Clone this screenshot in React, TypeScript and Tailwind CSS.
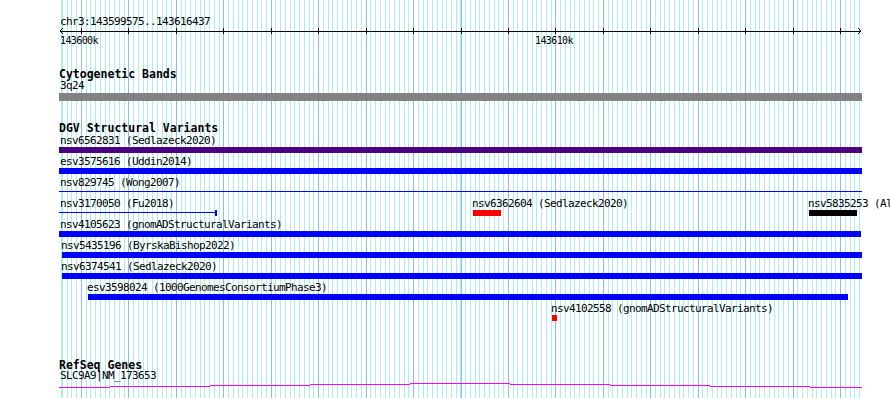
import React from 'react';

const TICKS = Array.from({ length: 17 }, (_, k) => Math.round(22 + 47.44 * k));

// stepped intron line of SLC9A9, [x0, x1, y] in track coords
const INTRON: [number, number, number][] = [
    [0, 51, 4],
    [51, 151, 3],
    [151, 251, 2],
    [251, 351, 1],
    [351, 451, 0],
    [451, 551, 1],
    [551, 651, 2],
    [651, 751, 3],
    [751, 803, 4],
];

function Label({ className = '', children }: { className?: string; children: React.ReactNode }) {
    return (
        <div className={`h-[10px] text-[11px] leading-[10px] tracking-[-0.62px] whitespace-nowrap ${className}`}>
            {children}
        </div>
    );
}

function Heading({ className = '', children }: { className?: string; children: React.ReactNode }) {
    return <div className={`h-[12px] text-[11.5px] leading-[12px] font-bold whitespace-nowrap ${className}`}>{children}</div>;
}

function Ruler() {
    return (
        <>
            <svg width="803" height="8" className="block" shapeRendering="crispEdges">
                <rect x="1" y="4" width="801" height="1" fill="#000" />
                {TICKS.map((t) => (
                    <rect key={t} x={t} y="1" width="1" height="6" fill="#000" />
                ))}
                <polyline points="4,1 1,4 4,7" fill="none" stroke="#000" strokeWidth="1" />
                <polyline points="799,1 802,4 799,7" fill="none" stroke="#000" strokeWidth="1" />
            </svg>
            <div className="flex h-[9px] mt-px text-[10px] leading-[9px] tracking-[-0.6px] whitespace-nowrap">
                <span className="-ml-[2px] w-[44px] shrink-0 text-center">143600k</span>
                <span className="ml-[431px] w-[44px] shrink-0 text-center">143610k</span>
            </div>
        </>
    );
}

export default function App() {
    return (
        <div className="w-full h-[398px] overflow-hidden bg-white text-black font-['DejaVu_Sans_Mono',monospace]">
            <div className="ml-[59px] w-[803px] h-full pt-[17px] bg-[repeating-linear-gradient(90deg,#88bbee_0px,#88bbee_1px,transparent_1px,transparent_47.44px),repeating-linear-gradient(90deg,#aaeeee_0px,#aaeeee_1px,transparent_1px,transparent_4.744px)] bg-[position:22px_0,3px_0]">
                {/* RULER */}
                <Label className="pl-px">chr3:143599575..143616437</Label>
                <Ruler />

                {/* CYTOBANDS */}
                <Heading className="mt-[23px]">Cytogenetic Bands</Heading>
                <Label className="mt-px pl-px">3q24</Label>
                <div className="mt-[2px] h-[8px] bg-[#828282]" />

                {/* DGV */}
                <Heading className="mt-[21px]">DGV Structural Variants</Heading>

                <Label className="mt-[2px] pl-px">nsv6562831 (Sedlazeck2020)</Label>
                <div className="mt-px h-[6px] bg-[#4b0082]" />

                <Label className="mt-[4px] pl-px">esv3575616 (Uddin2014)</Label>
                <div className="mt-px h-[6px] bg-[#0000ff]" />

                <Label className="mt-[4px] pl-px">nsv829745 (Wong2007)</Label>
                <div className="mt-[3px] h-px bg-[#0000ff]" />

                <Label className="mt-[7px] flex">
                    <span className="w-[413px] shrink-0 pl-px">nsv3170050 (Fu2018)</span>
                    <span className="w-[336px] shrink-0">nsv6362604 (Sedlazeck2020)</span>
                    <span className="shrink-0">nsv5835253 (Alsmadi2014)</span>
                </Label>
                <div className="mt-px flex items-start h-[6px]">
                    <div className="mt-[2px] w-[156px] shrink-0 h-px bg-[#0000ff]" />
                    <div className="w-[2px] shrink-0 h-[6px] bg-[#0000ff]" />
                    <div className="ml-[256px] w-[28px] shrink-0 h-[6px] bg-[#ff0000]" />
                    <div className="ml-[308px] w-[48px] shrink-0 h-[6px] bg-black" />
                </div>

                <Label className="mt-[4px] pl-px">nsv4105623 (gnomADStructuralVariants)</Label>
                <div className="mt-px h-[6px] w-[802px] bg-[#0000ff]" />

                <Label className="mt-[4px] pl-[2px]">nsv5435196 (ByrskaBishop2022)</Label>
                <div className="mt-px ml-[3px] h-[6px] bg-[#0000ff]" />

                <Label className="mt-[4px] pl-[2px]">nsv6374541 (Sedlazeck2020)</Label>
                <div className="mt-px ml-[3px] h-[6px] bg-[#0000ff]" />

                <Label className="mt-[4px] pl-[28px]">esv3598024 (1000GenomesConsortiumPhase3)</Label>
                <div className="mt-px ml-[29px] w-[760px] h-[6px] bg-[#0000ff]" />

                <Label className="mt-[4px] pl-[492px]">nsv4102558 (gnomADStructuralVariants)</Label>
                <div className="mt-px ml-[493px] w-[5px] h-[6px] bg-[#ff0000]" />

                {/* REFSEQ */}
                <Heading className="mt-[38px]">RefSeq Genes</Heading>
                <Label className="pl-px">SLC9A9|NM_173653</Label>
                <svg width="803" height="5" className="block mt-[2px]" shapeRendering="crispEdges">
                    {INTRON.map(([x0, x1, y]) => (
                        <rect key={x0} x={x0} y={y} width={x1 - x0} height="1" fill="#ff00ff" />
                    ))}
                </svg>
            </div>
        </div>
    );
}
